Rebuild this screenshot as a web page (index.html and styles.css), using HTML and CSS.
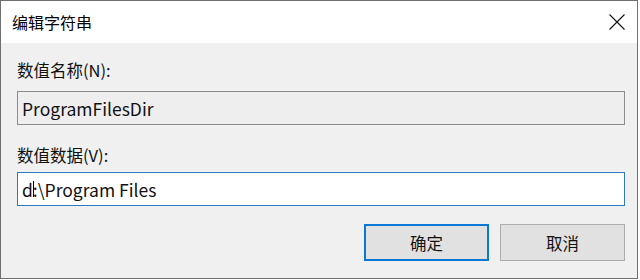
FILE: index.html
```html
<!DOCTYPE html>
<html lang="zh-CN">
<head>
<meta charset="utf-8">
<title>编辑字符串</title>
<link rel="stylesheet" href="styles.css">
</head>
<body>
<div class="window">
  <div class="titlebar">
    <span class="title">编辑字符串</span>
    <span class="close">
      <svg width="16" height="16" viewBox="0 0 16 16"><path d="M0.5 0.5 L15.5 15.5 M15.5 0.5 L0.5 15.5" stroke="#111" stroke-width="1.1" fill="none"/></svg>
    </span>
  </div>
  <div class="content">
    <div class="label">数值名称(N):</div>
    <div class="field field-readonly">ProgramFilesDir</div>
    <div class="label label-second">数值数据(V):</div>
    <div class="field field-active">d<span class="caret"></span>:\Program Files</div>
    <div class="buttons">
      <div class="btn btn-default">确定</div>
      <div class="btn">取消</div>
    </div>
  </div>
</div>
</body>
</html>
```

FILE: styles.css
```css
html, body {
  margin: 0;
  padding: 0;
  background: #ffffff;
}
body {
  font-family: "Noto Sans CJK SC", "Noto Sans", sans-serif;
  color: #111;
}
.window {
  width: 638px;
  height: 279px;
  box-sizing: border-box;
  border: 1px solid #707070;
  display: flex;
  flex-direction: column;
  background: #f0f0f0;
}
.titlebar {
  height: 42px;
  background: #ffffff;
  display: flex;
  align-items: center;
  justify-content: space-between;
  padding: 0 13px 0 11px;
}
.title {
  font-size: 16px;
  line-height: 20px;
  color: #000;
}
.close {
  display: flex;
  width: 16px;
  height: 16px;
  margin-right: -1px;
}
.content {
  flex: 1;
  padding: 17px 12px 0 16px;
  display: flex;
  flex-direction: column;
}
.label {
  font-size: 16.5px;
  line-height: 20px;
  height: 20px;
}
.label-second {
  margin-top: 20px;
}
.field {
  box-sizing: border-box;
  height: 34px;
  margin-top: 11px;
  padding: 0 4px;
  display: flex;
  align-items: center;
  font-size: 17.5px;
  color: #111;
}
.field-readonly {
  background: #efeeef;
  border: 1px solid #8c8c8c;
}
.field-active {
  margin-top: 7px;
  background: #ffffff;
  border: 1px solid #2b7bc4;
}
.caret {
  display: inline-block;
  width: 1px;
  height: 16px;
  background: #000;
  margin-right: -1px;
}
.buttons {
  margin-top: 18px;
  display: flex;
  justify-content: flex-end;
  gap: 11px;
}
.btn {
  box-sizing: border-box;
  width: 125px;
  height: 37px;
  background: #e1e1e1;
  border: 1px solid #adadad;
  display: flex;
  align-items: center;
  justify-content: center;
  font-size: 16.5px;
}
.btn-default {
  border: 2px solid #0a78d4;
}
```
